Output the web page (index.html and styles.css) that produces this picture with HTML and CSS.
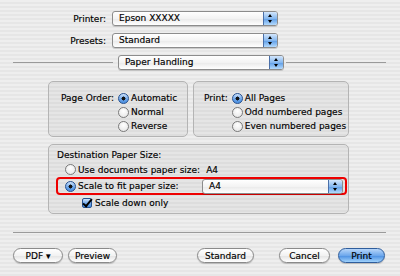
FILE: index.html
```html
<!DOCTYPE html>
<html lang="en">

<head>
  <meta charset="UTF-8">
  <title>Print</title>
  <link rel="stylesheet" href="styles.css">
</head>

<body>
  <div class="dialog">
    <div class="field">
      <span class="label">Printer:</span>
      <div class="popup"><span>Epson XXXXX</span><i class="arrows"></i></div>
    </div>
    <div class="field">
      <span class="label">Presets:</span>
      <div class="popup"><span>Standard</span><i class="arrows"></i></div>
    </div>
    <div class="pane">
      <span class="rule left"></span>
      <div class="popup"><span>Paper Handling</span><i class="arrows"></i></div>
      <span class="rule right"></span>
    </div>

    <div class="boxes">
      <div class="box order">
        <span class="boxlabel">Page Order:</span>
        <ul>
          <li><i class="radio on"></i>Automatic</li>
          <li><i class="radio"></i>Normal</li>
          <li><i class="radio"></i>Reverse</li>
        </ul>
      </div>
      <div class="box pages">
        <span class="boxlabel">Print:</span>
        <ul>
          <li><i class="radio on"></i>All Pages</li>
          <li><i class="radio"></i>Odd numbered pages</li>
          <li><i class="radio"></i>Even numbered pages</li>
        </ul>
      </div>
    </div>

    <div class="box dest">
      <p class="title">Destination Paper Size:</p>
      <p class="opt"><i class="radio"></i>Use documents paper size:<span class="size">A4</span></p>
      <div class="opt marked">
        <i class="radio on"></i><span class="scale">Scale to fit paper size:</span>
        <div class="popup wide"><span>A4</span><i class="arrows"></i></div>
      </div>
      <p class="opt sub"><i class="check"></i>Scale down only</p>
    </div>

    <hr class="sep">

    <div class="buttons">
      <button class="btn pdf">PDF &#9662;</button>
      <button class="btn preview">Preview</button>
      <button class="btn standard">Standard</button>
      <button class="btn cancel">Cancel</button>
      <button class="btn print">Print</button>
    </div>
  </div>
</body>

</html>
```

FILE: styles.css
```css
* {
  margin: 0;
  padding: 0;
  box-sizing: border-box;
}

body {
  width: 400px;
  height: 276px;
  overflow: hidden;
  font-family: "DejaVu Sans", sans-serif;
  font-size: 9px;
  color: #000;
  -webkit-text-stroke: 0.15px #000;
  background: repeating-linear-gradient(to bottom, #eeeeee 0 2px, #e6e6e6 2px 4px);
}

li {
  list-style: none;
}

.dialog {
  padding-top: 11px;
}

/* popup menus */
.field {
  display: flex;
  align-items: center;
  height: 15px;
  margin-bottom: 7px;
}

.label {
  width: 112px;
  padding-right: 6px;
  text-align: right;
}

.popup {
  display: flex;
  flex-shrink: 0;
  width: 166px;
  height: 15px;
  border: 1px solid #8c8c8c;
  border-radius: 3px;
  background: linear-gradient(#ffffff, #f3f3f3 50%, #e9e9e9 51%, #ffffff);
  box-shadow: 0 1px 0 rgba(0, 0, 0, 0.15);
  overflow: hidden;
}

.popup span {
  flex: 1;
  padding-left: 6px;
  line-height: 13px;
}

.arrows {
  position: relative;
  width: 14px;
  border-left: 1px solid #4a6fa8;
  background: linear-gradient(#d3e6fc, #86b8ef 50%, #5d9ce6 51%, #b3dafd);
}

.arrows::before,
.arrows::after {
  content: "";
  position: absolute;
  left: 4px;
  border-left: 2.5px solid transparent;
  border-right: 2.5px solid transparent;
}

.arrows::before {
  top: 2px;
  border-bottom: 3px solid #000;
}

.arrows::after {
  bottom: 2px;
  border-top: 3px solid #000;
}

.pane {
  display: flex;
  align-items: center;
  height: 15px;
  padding: 0 14px 0 13px;
  margin-top: 1px;
}

.rule {
  height: 1px;
  background: #9a9a9a;
}

.rule.left {
  width: 100px;
  margin-right: 5px;
}

.rule.right {
  flex: 1;
  margin-left: 2px;
}

/* group boxes */
.box {
  border: 1px solid #b4b4b4;
  border-radius: 5px;
  background: rgba(0, 0, 0, 0.035);
  white-space: nowrap;
}

.boxes {
  display: flex;
  gap: 5px;
  padding-left: 48px;
  margin-top: 11px;
}

.order,
.pages {
  display: flex;
  height: 56px;
  padding-top: 9px;
}

.order {
  width: 140px;
  padding-left: 12px;
}

.pages {
  width: 156px;
  padding-left: 10px;
}

.boxlabel {
  line-height: 14px;
  padding-right: 4px;
}

.box li,
.opt {
  display: flex;
  align-items: center;
  height: 14px;
}

.radio {
  flex-shrink: 0;
  width: 11px;
  height: 11px;
  margin-right: 2px;
  border: 1px solid #7a7a7a;
  border-radius: 50%;
  background: radial-gradient(circle at 50% 35%, #ffffff, #e2e2e2);
}

.radio.on {
  border-color: #25508f;
  background:
    radial-gradient(circle, #111 0 1.8px, transparent 2.2px),
    linear-gradient(#cfe4fc, #6ea6ea 55%, #4a8fe0);
}

.dest {
  width: 301px;
  height: 70px;
  margin: 7px 0 0 48px;
  padding: 3px 0 0 8px;
}

.title {
  line-height: 14px;
}

.opt {
  padding-left: 8px;
  height: 15px;
}

.size {
  margin-left: 6px;
}

.marked {
  width: 291px;
  height: 18px;
  margin-left: -1px;
  padding-left: 7px;
  border: 2px solid #ee0000;
  border-radius: 4px;
}

.scale {
  width: 124px;
}

.popup.wide {
  width: 141px;
}

.sub {
  padding-left: 25px;
}

.check {
  position: relative;
  flex-shrink: 0;
  width: 10px;
  height: 10px;
  margin-right: 3px;
  border: 1px solid #25508f;
  border-radius: 2px;
  background: linear-gradient(#cfe4fc, #6ea6ea 55%, #4a8fe0);
}

.check::after {
  content: "";
  position: absolute;
  left: 2px;
  top: -2px;
  width: 3px;
  height: 8px;
  border-right: 2px solid #000;
  border-bottom: 2px solid #000;
  transform: rotate(40deg);
}

.sep {
  margin: 18px 14px 0 13px;
  border: 0;
  height: 1px;
  background: #9a9a9a;
}

/* push buttons */
.buttons {
  display: flex;
  margin-top: 15px;
  padding-left: 13px;
}

.btn {
  height: 15px;
  border: 1px solid #8a8a8a;
  border-radius: 8px;
  font-family: "DejaVu Sans", sans-serif;
  font-size: 9px;
  color: #000;
  -webkit-text-stroke: 0.15px #000;
  background: linear-gradient(#ffffff, #f2f2f2 50%, #e3e3e3 51%, #ffffff);
  box-shadow: 0 1px 1px rgba(0, 0, 0, 0.2);
}

.pdf {
  width: 50px;
}

.preview {
  width: 49px;
  margin-left: 5px;
}

.standard {
  width: 57px;
  margin-left: 80px;
}

.cancel {
  width: 51px;
  margin-left: 25px;
}

.print {
  width: 47px;
  margin-left: 8px;
  border-color: #2e5d9c;
  background: linear-gradient(#b7d6fa, #6ea8ec 50%, #4a8ee2 51%, #9fd1fb);
}
```
